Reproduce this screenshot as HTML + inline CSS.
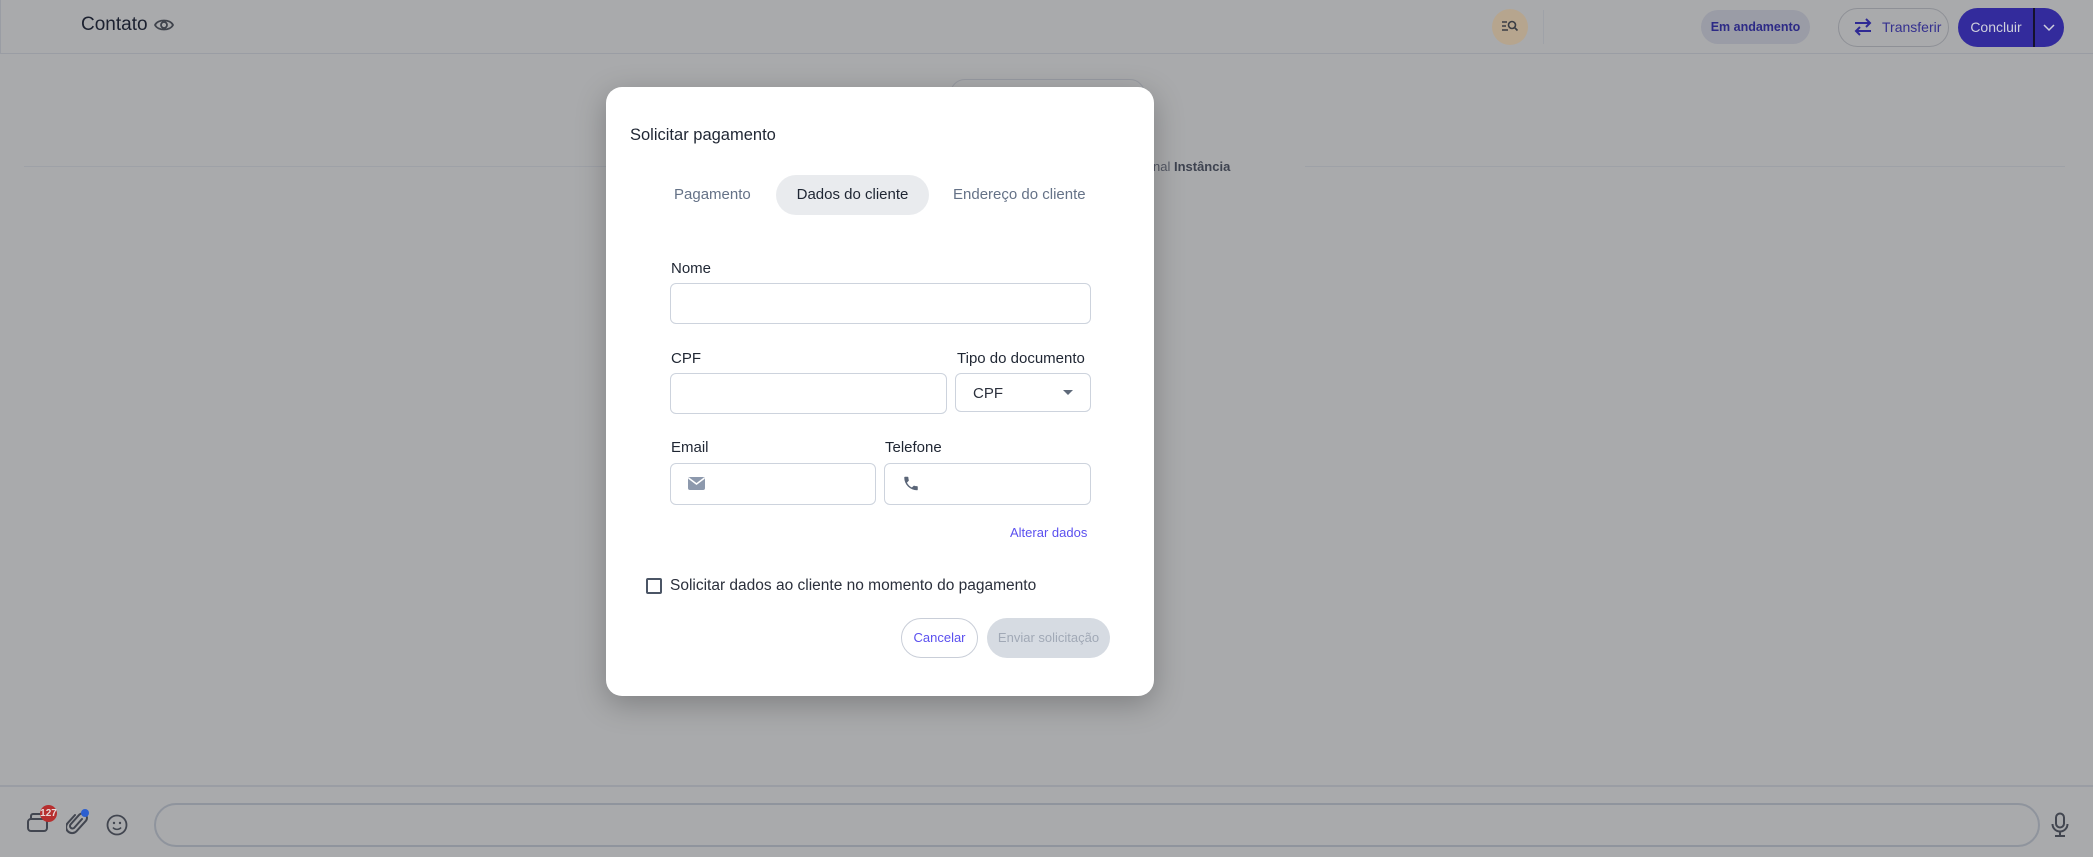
<!DOCTYPE html>
<html><head><meta charset="utf-8">
<style>
*{box-sizing:border-box;margin:0;padding:0}
body{width:2093px;height:857px;overflow:hidden;background:#a9aaac;font-family:"Liberation Sans",sans-serif;position:relative}
.abs{position:absolute;white-space:nowrap}
.input{position:absolute;background:#fff;border:1.5px solid #cdd3dd;border-radius:6px}
.lbl{position:absolute;font-size:15px;color:#1f2633;white-space:nowrap}
</style></head><body>
<!-- top bar -->
<div class="abs" style="left:0;top:0;width:2093px;height:54px;border-bottom:1.5px solid #9a9da4;border-left:1px solid #9a9da4"></div>
<div class="abs" style="left:81px;top:14px;font-size:19px;color:#1c2130">Contato</div>
<svg class="abs" style="left:154px;top:16px" width="20" height="18" viewBox="0 0 20 18"><path d="M1 9C4 3 16 3 19 9C16 15 4 15 1 9Z" fill="none" stroke="#3f434c" stroke-width="1.8"/><circle cx="10" cy="9" r="3" fill="none" stroke="#3f434c" stroke-width="1.8"/></svg>
<div class="abs" style="left:1492px;top:9px;width:36px;height:36px;border-radius:50%;background:#b6a58e"></div>
<svg class="abs" style="left:1501px;top:19px" width="18" height="14" viewBox="0 0 18 14"><path d="M1 3h5M1 7h4M1 11h6" stroke="#3a3d44" stroke-width="1.5"/><circle cx="11" cy="6" r="3.5" fill="none" stroke="#3a3d44" stroke-width="1.6"/><path d="M13.5 8.5L16.5 11.5" stroke="#3a3d44" stroke-width="1.6"/></svg>
<div class="abs" style="left:1543px;top:10px;width:1px;height:34px;background:#9fa2a8"></div>
<div class="abs" style="left:1701px;top:10px;width:109px;height:34px;border-radius:17px;background:#9a9ca6;color:#2d2a86;font-size:12.5px;line-height:34px;text-align:center;font-weight:bold">Em andamento</div>
<div class="abs" style="left:1838px;top:8px;width:111px;height:39px;border-radius:20px;border:1.5px solid #8e9096"></div>
<svg class="abs" style="left:1852px;top:16px" width="22" height="22" viewBox="0 0 22 22"><path d="M3 7h15M14 3l4 4-4 4M19 15H4M8 11l-4 4 4 4" fill="none" stroke="#2f2a94" stroke-width="2"/></svg>
<div class="abs" style="left:1882px;top:8px;font-size:14px;line-height:39px;color:#34308f">Transferir</div>
<div class="abs" style="left:1958px;top:8px;width:106px;height:39px;border-radius:20px;background:#332b9c;overflow:hidden">
<div style="position:absolute;left:0;width:76px;top:0;height:39px;line-height:39px;text-align:center;color:#cfd0dc;font-size:14px">Concluir</div>
<div style="position:absolute;left:75px;top:0;width:1.5px;height:39px;background:#15122e"></div>
<svg style="position:absolute;left:85px;top:15px" width="12" height="9" viewBox="0 0 12 9"><path d="M1 2l5 5 5-5" fill="none" stroke="#cfd0dc" stroke-width="1.5"/></svg>
</div>
<!-- chat body bits -->
<div class="abs" style="left:24px;top:166px;width:583px;height:1px;background:#9ea1a7"></div>
<div class="abs" style="left:1305px;top:166px;width:760px;height:1px;background:#9ea1a7"></div>
<div class="abs" style="left:950px;top:79px;width:195px;height:30px;border-radius:15px;border:1px solid #979aa1"></div>
<div class="abs" style="left:1153px;top:159px;font-size:13px;color:#545864">nal <b style="color:#3e4350">Instância</b></div>
<!-- bottom bar -->
<div class="abs" style="left:0;top:785px;width:2093px;height:1.5px;background:#9a9da4"></div>
<svg class="abs" style="left:26px;top:808px" width="24" height="26" viewBox="0 0 24 26"><rect x="2" y="11" width="19" height="12" rx="3" fill="none" stroke="#424650" stroke-width="2"/><path d="M5 11V8a2 2 0 0 1 2-2h10a2 2 0 0 1 2 2v3" fill="none" stroke="#424650" stroke-width="2"/></svg>
<div class="abs" style="left:40px;top:805px;width:17px;height:17px;border-radius:50%;background:#b72f2f;color:#e8d8d8;font-size:10px;line-height:17px;text-align:center;font-weight:bold">127</div>
<svg class="abs" style="left:66px;top:810px" width="22" height="26" viewBox="0 0 22 26"><path d="M16 9l-8 9a2.5 2.5 0 0 1-3.5-3.5l9-10a4.5 4.5 0 0 1 6.4 6.3l-9.5 10.5a6 6 0 0 1-8.6-8.4L9 5" fill="none" stroke="#424650" stroke-width="2" stroke-linecap="round"/></svg>
<div class="abs" style="left:81px;top:809px;width:8px;height:8px;border-radius:50%;background:#2c5fd0"></div>
<svg class="abs" style="left:106px;top:814px" width="22" height="22" viewBox="0 0 22 22"><circle cx="11" cy="11" r="9.5" fill="none" stroke="#424650" stroke-width="1.8"/><circle cx="8" cy="9" r="1.2" fill="#424650"/><circle cx="14" cy="9" r="1.2" fill="#424650"/><path d="M7 13.5c2 2.5 6 2.5 8 0" fill="none" stroke="#424650" stroke-width="1.6"/></svg>
<div class="abs" style="left:154px;top:803px;width:1886px;height:44px;border-radius:22px;border:2px solid #8f949d"></div>
<svg class="abs" style="left:2051px;top:812px" width="18" height="26" viewBox="0 0 18 26"><rect x="5" y="1.5" width="8" height="14" rx="4" fill="none" stroke="#424650" stroke-width="2"/><path d="M1.5 12a7.5 7.5 0 0 0 15 0M9 19.5v4M4 24h10" fill="none" stroke="#424650" stroke-width="2"/></svg>
<!-- modal -->
<div class="abs" style="left:606px;top:87px;width:548px;height:609px;background:#fff;border-radius:16px;box-shadow:0 8px 30px rgba(0,0,0,.25)"></div>
<div class="abs" style="left:630px;top:126px;font-size:16.5px;color:#1f2633">Solicitar pagamento</div>
<div class="abs" style="left:776px;top:175px;width:153px;height:40px;border-radius:20px;background:#e9ebee"></div>
<div class="abs" style="left:674px;top:186px;font-size:15px;color:#657287">Pagamento</div>
<div class="abs" style="left:776px;top:186px;width:153px;text-align:center;font-size:15px;color:#1f2633">Dados do cliente</div>
<div class="abs" style="left:953px;top:186px;font-size:15px;color:#657287">Endereço do cliente</div>
<div class="lbl" style="left:671px;top:260px">Nome</div>
<div class="input" style="left:670px;top:283px;width:421px;height:41px"></div>
<div class="lbl" style="left:671px;top:350px">CPF</div>
<div class="lbl" style="left:957px;top:350px">Tipo do documento</div>
<div class="input" style="left:670px;top:373px;width:277px;height:41px"></div>
<div class="input" style="left:955px;top:373px;width:136px;height:39px"></div>
<div class="abs" style="left:973px;top:385px;font-size:15px;color:#2b303c">CPF</div>
<div class="abs" style="left:1063px;top:390px;width:0;height:0;border-left:5px solid transparent;border-right:5px solid transparent;border-top:5px solid #5f6a7a"></div>
<div class="lbl" style="left:671px;top:439px">Email</div>
<div class="lbl" style="left:885px;top:439px">Telefone</div>
<div class="input" style="left:670px;top:463px;width:206px;height:42px"></div>
<div class="input" style="left:884px;top:463px;width:207px;height:42px"></div>
<svg class="abs" style="left:688px;top:477px" width="17" height="13" viewBox="0 0 17 13"><rect x="0" y="0" width="17" height="13" rx="2" fill="#8d99ad"/><path d="M0.5 1l8 6 8-6" fill="none" stroke="#fff" stroke-width="1.5"/></svg>
<svg class="abs" style="left:902px;top:474px" width="18" height="19" viewBox="0 0 24 24"><path d="M6.6 10.8a15 15 0 0 0 6.6 6.6l2.2-2.2a1 1 0 0 1 1-.25 11.4 11.4 0 0 0 3.6.57 1 1 0 0 1 1 1V20a1 1 0 0 1-1 1A17 17 0 0 1 3 4a1 1 0 0 1 1-1h3.5a1 1 0 0 1 1 1c0 1.25.2 2.45.57 3.57a1 1 0 0 1-.25 1z" fill="#5a6577"/></svg>
<div class="abs" style="left:1010px;top:525px;font-size:13px;color:#5b50ef">Alterar dados</div>
<div class="abs" style="left:646px;top:578px;width:16px;height:16px;border:2px solid #4b5565;border-radius:2px"></div>
<div class="abs" style="left:670px;top:577px;font-size:15.5px;color:#2b303c">Solicitar dados ao cliente no momento do pagamento</div>
<div class="abs" style="left:901px;top:618px;width:77px;height:40px;border-radius:20px;border:1px solid #c9ced8;text-align:center;line-height:38px;font-size:13px;color:#5b50ef">Cancelar</div>
<div class="abs" style="left:987px;top:618px;width:123px;height:40px;border-radius:20px;background:#d6dbe2;text-align:center;line-height:40px;font-size:13px;color:#a1a9b6">Enviar solicitação</div>
</body></html>
